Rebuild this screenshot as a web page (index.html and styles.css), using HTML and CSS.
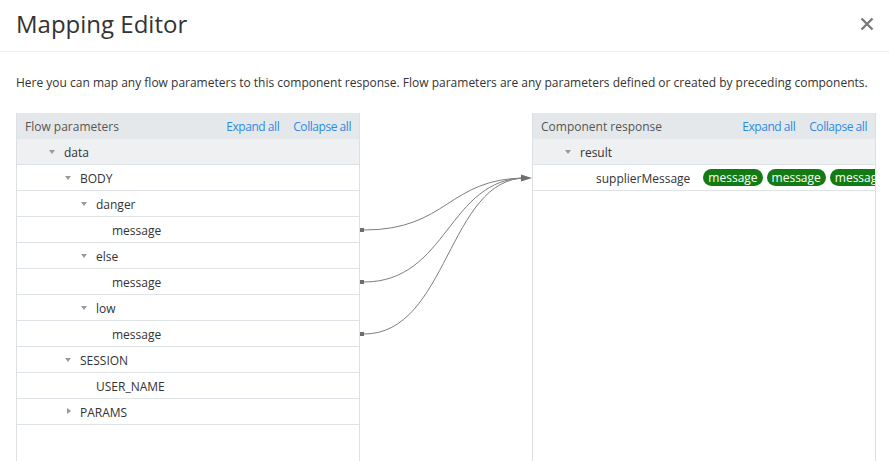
FILE: index.html
```html
<!DOCTYPE html>
<html>
<head>
<meta charset="utf-8">
<link rel="stylesheet" href="styles.css">
</head>
<body>
<div class="modal">
  <div class="modal-header">
    <h1 class="title">Mapping Editor</h1>
    <button class="close" aria-label="Close">
      <svg width="14" height="14" viewBox="0 0 14 14"><path d="M1.5 1.5 L12.5 12.5 M12.5 1.5 L1.5 12.5" stroke="#7a7a7a" stroke-width="2.4" stroke-linecap="butt"/></svg>
    </button>
  </div>
  <p class="desc">Here you can map any flow parameters to this component response. Flow parameters are any parameters defined or created by preceding components.</p>
  <div class="mapper">
    <div class="panel">
      <div class="panel-head">
        <span class="panel-title">Flow parameters</span>
        <span class="links"><a class="link">Expand all</a><a class="link">Collapse all</a></span>
      </div>
      <div class="row lvl0 sel"><span class="tri down"></span><span class="label">data</span></div>
      <div class="row lvl1"><span class="tri down"></span><span class="label">BODY</span></div>
      <div class="row lvl2"><span class="tri down"></span><span class="label">danger</span></div>
      <div class="row lvl3"><span class="tri"></span><span class="label">message</span></div>
      <div class="row lvl2"><span class="tri down"></span><span class="label">else</span></div>
      <div class="row lvl3"><span class="tri"></span><span class="label">message</span></div>
      <div class="row lvl2"><span class="tri down"></span><span class="label">low</span></div>
      <div class="row lvl3"><span class="tri"></span><span class="label">message</span></div>
      <div class="row lvl1"><span class="tri down"></span><span class="label">SESSION</span></div>
      <div class="row lvl2"><span class="tri"></span><span class="label">USER_NAME</span></div>
      <div class="row lvl1"><span class="tri right"></span><span class="label">PARAMS</span></div>
    </div>
    <div class="links-col">
      <svg class="wires" width="172" height="348" viewBox="0 0 172 348">
        <g fill="none" stroke="#7d7d7d" stroke-width="1">
          <path d="M4 117 C88 117 88 65 166 65"/>
          <path d="M4 169 C88 169 88 65 166 65"/>
          <path d="M4 221 C88 221 88 65 166 65"/>
        </g>
        <g fill="#6e6e6e">
          <rect x="0" y="115" width="4" height="4"/>
          <rect x="0" y="167" width="4" height="4"/>
          <rect x="0" y="219" width="4" height="4"/>
          <polygon points="161,61.5 172,65 161,68.5"/>
        </g>
      </svg>
    </div>
    <div class="panel">
      <div class="panel-head">
        <span class="panel-title">Component response</span>
        <span class="links"><a class="link">Expand all</a><a class="link">Collapse all</a></span>
      </div>
      <div class="row lvl0 sel"><span class="tri down"></span><span class="label">result</span></div>
      <div class="row lvl1"><span class="tri"></span><span class="label">supplierMessage</span>
        <span class="pills"><span class="pill">message</span><span class="pill">message</span><span class="pill">message</span></span>
      </div>
    </div>
  </div>
</div>
</body>
</html>
```

FILE: styles.css
```css
html, body {
  margin: 0;
  padding: 0;
  background: #fff;
  overflow: hidden;
}
body {
  font-family: "Open Sans", "DejaVu Sans", sans-serif;
  color: #333;
  width: 889px;
  height: 461px;
}
.modal {
  display: flex;
  flex-direction: column;
}
.modal-header {
  height: 52px;
  box-sizing: border-box;
  border-bottom: 1px solid #eeeeee;
  display: flex;
  align-items: center;
  justify-content: space-between;
  padding: 0 15px 0 16px;
}
.title {
  margin: 0;
  font-size: 24px;
  font-weight: 400;
  color: #333;
  line-height: 1;
  position: relative;
  top: -2px;
}
.close {
  border: 0;
  background: none;
  padding: 0;
  width: 14px;
  height: 14px;
  display: block;
  position: relative;
  top: -2px;
}
.close svg { display: block; }
.desc {
  margin: 0;
  padding: 22px 16px 0 16px;
  font-size: 12px;
  line-height: 18px;
  color: #333;
  height: 39px;
}
.mapper {
  display: flex;
  padding-left: 16px;
}
.panel {
  width: 344px;
  height: 360px;
  box-sizing: border-box;
  border-left: 1px solid #dcdfe3;
  border-right: 1px solid #dcdfe3;
  font-size: 12px;
  overflow: hidden;
}
.panel-head {
  height: 26px;
  background: #e5e8eb;
  display: flex;
  align-items: center;
  justify-content: space-between;
  padding: 0 8px 0 8px;
}
.panel-title {
  color: #555;
}
.links {
  display: flex;
  gap: 14px;
}
.link {
  color: #2b8be3;
  cursor: pointer;
  letter-spacing: -0.45px;
}
.row {
  height: 25px;
  box-sizing: border-box;
  padding-top: 2px;
  border-bottom: 1px solid #dfe2e6;
  display: flex;
  align-items: center;
  white-space: nowrap;
  color: #333;
}
.row { height: 26px; }
.row.sel { background: #eef0f2; }
.lvl0 { padding-left: 31px; }
.lvl1 { padding-left: 47px; }
.lvl2 { padding-left: 63px; }
.lvl3 { padding-left: 79px; }
.tri {
  width: 16px;
  height: 8px;
  flex: none;
  position: relative;
}
.tri.down::before {
  content: "";
  position: absolute;
  left: 1px;
  top: 1px;
  border-left: 3.5px solid transparent;
  border-right: 3.5px solid transparent;
  border-top: 4px solid #9a9a9a;
}
.tri.right::before {
  content: "";
  position: absolute;
  left: 3px;
  top: -1px;
  border-top: 3.5px solid transparent;
  border-bottom: 3.5px solid transparent;
  border-left: 4px solid #9a9a9a;
}
.label { flex: none; }
.pills {
  display: flex;
  gap: 4px;
  margin-left: 13px;
  flex: none;
  position: relative;
  top: -1px;
}
.pill {
  background: #137b13;
  color: #fff;
  height: 17px;
  line-height: 17px;
  padding: 0 5px;
  border-radius: 9px;
  font-size: 12px;
}
.links-col {
  width: 172px;
  flex: none;
}
.wires {
  display: block;
  overflow: visible;
}
```
